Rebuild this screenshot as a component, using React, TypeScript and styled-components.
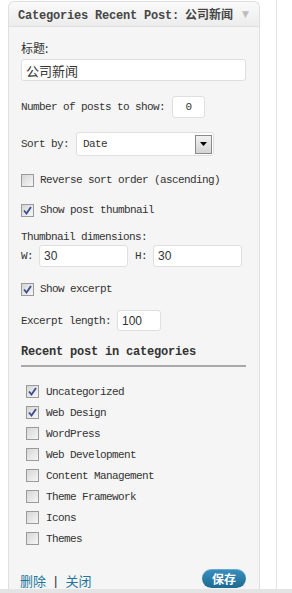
import React from 'react'
import styled, { createGlobalStyle } from 'styled-components'

const GlobalStyle = createGlobalStyle`
  html, body {
    margin: 0;
    padding: 0;
    background: #fff;
  }
  body {
    font-family: "Liberation Mono", "Noto Sans CJK SC", monospace;
    font-size: 11px;
    color: #333;
  }
`

const mono = `"Liberation Mono", "Noto Sans CJK SC", monospace`
const cjk = `"Noto Sans CJK SC", "Liberation Sans", sans-serif`

const Page = styled.div`
  width: 292px;
  height: 593px;
  display: flex;
  flex-direction: column;
  overflow: hidden;
`

const Main = styled.div`
  flex: 1;
  display: flex;
  min-height: 0;
`

const Rule = styled.div`
  margin-left: 16px;
  border-left: 1px solid #e3e3e3;
`

const BottomBar = styled.div`
  height: 4px;
  background: #e4e4e4;
`

const Widget = styled.div`
  margin: 1px 0 0 8px;
  width: 250px;
  border: 1px solid #dfdfdf;
  border-bottom: none;
  border-radius: 6px 6px 0 0;
  background: #f5f5f5;
  display: flex;
  flex-direction: column;
`

const Header = styled.div`
  height: 27px;
  display: flex;
  align-items: center;
  justify-content: space-between;
  padding: 0 10px 0 9px;
  background: linear-gradient(to bottom, #fafafa, #ececec);
  border-bottom: 1px solid #dfdfdf;
  border-radius: 6px 6px 0 0;
`

const HeaderTitle = styled.span`
  font-family: ${mono};
  font-weight: bold;
  font-size: 12px;
  letter-spacing: -0.2px;
  color: #464646;
  white-space: nowrap;
`

const HeaderCjk = styled.span`
  font-family: ${cjk};
  font-size: 12px;
  letter-spacing: 0;
  margin-left: 6px;
`

const Toggle = styled.span`
  font-size: 9px;
  color: #bcbcbc;
  font-family: "DejaVu Sans", sans-serif;
`

const Body = styled.div`
  padding: 13px 13px 0 12px;
  display: flex;
  flex-direction: column;
`

const CjkLabel = styled.div`
  font-family: ${cjk};
  font-size: 12px;
  line-height: 16px;
  color: #333;
`

const TextField = styled.div<{ w?: number; mono?: boolean; center?: boolean; h?: number }>`
  box-sizing: border-box;
  width: ${p => (p.w ? `${p.w}px` : '100%')};
  height: ${p => p.h ?? 22}px;
  background: #fff;
  border: 1px solid #dfdfdf;
  border-radius: 3px;
  display: flex;
  align-items: center;
  justify-content: ${p => (p.center ? 'center' : 'flex-start')};
  padding: 0 ${p => (p.center ? 0 : 4)}px;
  font-family: ${p => (p.mono ? mono : `"Liberation Sans", Arial, sans-serif`)};
  font-size: ${p => (p.mono ? 11 : 12)}px;
  letter-spacing: ${p => (p.mono ? '-0.6px' : '0')};
  color: #333;
  flex-shrink: 0;
`

const TitleValue = styled.span`
  font-family: ${cjk};
  font-size: 13px;
`

const Row = styled.div<{ mt: number; gap?: number }>`
  display: flex;
  align-items: center;
  margin-top: ${p => p.mt}px;
  gap: ${p => p.gap ?? 0}px;
`

const Text = styled.span<{ w?: number }>`
  font-family: ${mono};
  font-size: 11px;
  letter-spacing: -0.6px;
  line-height: 16px;
  white-space: nowrap;
  ${p => (p.w ? `width: ${p.w}px;` : '')}
  flex-shrink: 0;
`

const Select = styled.div`
  box-sizing: border-box;
  width: 138px;
  height: 24px;
  margin-left: auto;
  margin-right: 32px;
  background: #fff;
  border: 1px solid #dfdfdf;
  border-radius: 3px;
  display: flex;
  align-items: center;
  justify-content: space-between;
  padding: 0 1px 0 6px;
`

const DropButton = styled.span`
  box-sizing: border-box;
  width: 17px;
  height: 19px;
  border: 1px solid #8a8a8a;
  background: linear-gradient(to bottom, #f2f2f2, #d4d4d4);
  display: flex;
  align-items: center;
  justify-content: center;
`

const Check = styled.span`
  box-sizing: border-box;
  width: 13px;
  height: 13px;
  border: 1px solid #9a9a9a;
  background: linear-gradient(135deg, #d6d6d6, #f6f6f6);
  display: inline-flex;
  align-items: center;
  justify-content: center;
  flex-shrink: 0;
`

const CheckRow = styled.div<{ mt?: number; indent?: number }>`
  display: flex;
  align-items: center;
  gap: 6px;
  height: 16px;
  margin-top: ${p => p.mt ?? 0}px;
  padding-left: ${p => p.indent ?? 0}px;
`

const Heading = styled.div`
  margin-top: 13px;
  padding-bottom: 5px;
  border-bottom: 2px solid #a9a9a9;
  font-family: ${mono};
  font-weight: bold;
  font-size: 12px;
  letter-spacing: -0.2px;
  line-height: 16px;
  color: #333;
`

const CategoryList = styled.ul`
  list-style: none;
  margin: 14px 0 0;
  padding: 0 0 0 5px;
`

const CategoryItem = styled.li`
  height: 21px;
  display: flex;
  align-items: center;
  gap: 7px;
`

const Footer = styled.div`
  margin-top: 19px;
  height: 21px;
  display: flex;
  align-items: center;
  justify-content: space-between;
`

const Links = styled.div`
  display: flex;
  align-items: center;
  gap: 8px;
  font-family: ${cjk};
  font-size: 13px;
  color: #21759b;
  margin-top: 4px;
  margin-left: -1px;
`

const Sep = styled.span`
  color: #333;
  font-family: "Liberation Sans", sans-serif;
`

const SaveButton = styled.button`
  width: 44px;
  height: 19px;
  margin-top: -1px;
  border: none;
  border-radius: 10px;
  background: linear-gradient(to bottom, #3a8fbf, #1d6a93);
  box-shadow: inset 0 1px 0 rgba(255, 255, 255, 0.25);
  color: #fff;
  font-family: ${cjk};
  font-weight: bold;
  font-size: 12px;
  padding: 0;
  line-height: 19px;
`

const CheckBox = ({ checked }: { checked?: boolean }) => (
  <Check>
    {checked && (
      <svg width="9" height="9" viewBox="0 0 9 9">
        <path d="M1 4.5 L3.5 7.5 L8 1" fill="none" stroke="#3b4d8f" strokeWidth="1.8" />
      </svg>
    )}
  </Check>
)

const categories = [
  { name: 'Uncategorized', checked: true },
  { name: 'Web Design', checked: true },
  { name: 'WordPress', checked: false },
  { name: 'Web Development', checked: false },
  { name: 'Content Management', checked: false },
  { name: 'Theme Framework', checked: false },
  { name: 'Icons', checked: false },
  { name: 'Themes', checked: false }
]

const App = () => (
  <Page>
    <GlobalStyle />
    <Main>
      <Widget>
        <Header>
          <HeaderTitle>
            Categories Recent Post:<HeaderCjk>公司新闻</HeaderCjk>
          </HeaderTitle>
          <Toggle>▼</Toggle>
        </Header>
        <Body>
          <CjkLabel>标题:</CjkLabel>
          <Row mt={3}>
            <TextField>
              <TitleValue>公司新闻</TitleValue>
            </TextField>
          </Row>

          <Row mt={15}>
            <Text w={151}>Number of posts to show:</Text>
            <TextField w={33} mono center>0</TextField>
          </Row>

          <Row mt={14}>
            <Text>Sort by:</Text>
            <Select>
              <Text>Date</Text>
              <DropButton>
                <svg width="7" height="4" viewBox="0 0 7 4">
                  <path d="M0 0 H7 L3.5 4 Z" fill="#000" />
                </svg>
              </DropButton>
            </Select>
          </Row>

          <CheckRow mt={16}>
            <CheckBox />
            <Text>Reverse sort order (ascending)</Text>
          </CheckRow>
          <CheckRow mt={14}>
            <CheckBox checked />
            <Text>Show post thumbnail</Text>
          </CheckRow>

          <Row mt={11}>
            <Text>Thumbnail dimensions:</Text>
          </Row>
          <Row mt={0}>
            <Text w={18}>W:</Text>
            <TextField w={89}>30</TextField>
            <Text w={18} style={{ marginLeft: 7 }}>H:</Text>
            <TextField w={89}>30</TextField>
          </Row>

          <CheckRow mt={14}>
            <CheckBox checked />
            <Text>Show excerpt</Text>
          </CheckRow>

          <Row mt={13}>
            <Text w={96}>Excerpt length:</Text>
            <TextField w={44} h={21}>100</TextField>
          </Row>

          <Heading>Recent post in categories</Heading>

          <CategoryList>
            {categories.map(c => (
              <CategoryItem key={c.name}>
                <CheckBox checked={c.checked} />
                <Text>{c.name}</Text>
              </CategoryItem>
            ))}
          </CategoryList>

          <Footer>
            <Links>
              <span>删除</span>
              <Sep>|</Sep>
              <span>关闭</span>
            </Links>
            <SaveButton>保存</SaveButton>
          </Footer>
        </Body>
      </Widget>
      <Rule />
    </Main>
    <BottomBar />
  </Page>
)

export default App
